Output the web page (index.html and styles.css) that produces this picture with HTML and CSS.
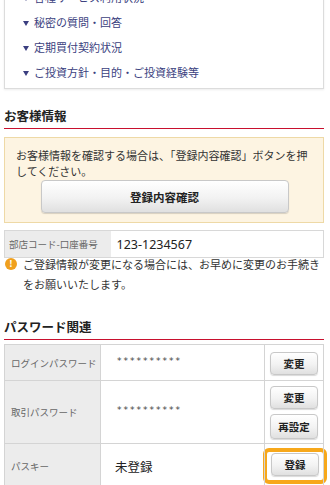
FILE: index.html
```html
<!DOCTYPE html>
<html lang="ja">
<head>
<meta charset="utf-8">
<link rel="stylesheet" href="styles.css">
</head>
<body>
<div class="page">
  <ul class="menu">
    <li><span class="tri"></span>各種サービス利用状況</li>
    <li><span class="tri"></span>秘密の質問・回答</li>
    <li><span class="tri"></span>定期買付契約状況</li>
    <li><span class="tri"></span>ご投資方針・目的・ご投資経験等</li>
  </ul>

  <h2 class="heading">お客様情報</h2>
  <div class="notice">
    <p>お客様情報を確認する場合は、「登録内容確認」ボタンを押してください。</p>
    <button class="btn btn-wide">登録内容確認</button>
  </div>

  <table class="info">
    <tr><th>部店コード-口座番号</th><td>123-1234567</td></tr>
  </table>

  <div class="warn">
    <span class="warn-icon">!</span>
    <p>ご登録情報が変更になる場合には、お早めに変更のお手続きをお願いいたします。</p>
  </div>

  <h2 class="heading heading-pw">パスワード関連</h2>
  <table class="pw">
    <colgroup><col class="c1"><col class="c2"><col class="c3"></colgroup>
    <tr class="r1">
      <th>ログインパスワード</th>
      <td class="val stars">**********</td>
      <td class="act"><button class="btn btn-sm">変更</button></td>
    </tr>
    <tr class="r2">
      <th>取引パスワード</th>
      <td class="val stars">**********</td>
      <td class="act"><button class="btn btn-sm">変更</button><button class="btn btn-sm">再設定</button></td>
    </tr>
    <tr class="r3">
      <th>パスキー</th>
      <td class="val">未登録</td>
      <td class="act"><span class="hl"><button class="btn btn-sm">登録</button></span></td>
    </tr>
  </table>
</div>
</body>
</html>
```

FILE: styles.css
```css
* { box-sizing: border-box; }
html, body { margin: 0; padding: 0; background: #fff; }
body {
  font-family: "Noto Sans CJK JP", "Noto Sans", sans-serif;
  font-size: 11px;
  color: #333;
  overflow: hidden;
}
.page { padding: 0 6px 0 4px; }

.menu {
  list-style: none;
  margin: -15px 0 0;
  padding: 0 0 3px 17px;
  border: 1px solid #dcdcdc;
  border-top: none;
  box-shadow: 0 1px 2px rgba(0,0,0,0.08);
}
.menu li {
  height: 25px;
  line-height: 25px;
  color: #3b3f80;
  display: flex;
  align-items: center;
}
.tri {
  width: 0; height: 0;
  border-left: 3.5px solid transparent;
  border-right: 3.5px solid transparent;
  border-top: 5px solid #3b3f80;
  margin: 1px 5px 0 1px;
}

.heading {
  margin: 18px 0 0;
  font-size: 12.5px;
  font-weight: bold;
  color: #222;
  line-height: 17px;
  padding-bottom: 4px;
  border-bottom: 1.5px solid #c8102e;
}
.heading-pw { margin-top: 24px; }

.notice {
  margin-top: 8px;
  background: #fdf4e2;
  border: 1px solid #eed9a6;
  padding: 9px 10px 9px 11px;
}
.notice p { margin: 0; line-height: 16px; }
.btn {
  font-family: inherit;
  font-weight: bold;
  color: #222;
  background: linear-gradient(#ffffff, #f2f2f2 55%, #e0e0e0);
  border: 1px solid #c8c8c8;
  border-radius: 4px;
  box-shadow: 0 1px 1px rgba(0,0,0,0.15);
  cursor: pointer;
  padding: 0;
}
.btn-wide {
  display: block;
  width: 248px;
  height: 33px;
  margin: 1px auto 0;
  font-size: 11.5px;
}

.info {
  width: 100%;
  margin-top: 7px;
  border-collapse: collapse;
  border: 1px solid #d8d8d8;
}
.info th {
  width: 106px;
  height: 27px;
  background: #ececec;
  color: #666;
  font-weight: normal;
  font-size: 9.5px;
  text-align: left;
  padding: 0 0 0 4px;
  white-space: nowrap;
}
.info td {
  font-family: "Noto Sans", sans-serif;
  font-size: 12.5px;
  color: #222;
  padding: 0 0 0 6px;
}

.warn {
  display: flex;
  align-items: flex-start;
  margin-top: -4px;
}
.warn-icon {
  flex: none;
  width: 12px; height: 12px;
  border-radius: 50%;
  background: #f0a01e;
  color: #fff;
  font-size: 9px;
  font-weight: bold;
  line-height: 12px;
  text-align: center;
  margin: 4px 6px 0 1px;
}
.warn p { margin: 0; line-height: 20px; }

.pw {
  width: 100%;
  margin-top: 4px;
  border-collapse: collapse;
  border: 1px solid #d4d4d4;
  table-layout: fixed;
}
.c1 { width: 96px; }
.c3 { width: 59px; }
.pw th, .pw td { border: 1px solid #d4d4d4; vertical-align: middle; }
.pw th {
  background: #ececec;
  color: #666;
  font-weight: normal;
  font-size: 9.5px;
  text-align: left;
  padding: 0 0 0 6px;
  white-space: nowrap;
}
.pw .val { padding: 0 0 0 16px; color: #222; }
.pw .stars { font-family: "DejaVu Sans", sans-serif; font-size: 9px; letter-spacing: 2px; color: #444; padding-bottom: 4px; }
.pw .val:not(.stars) { font-size: 12.5px; padding-left: 14px; }
.pw .act {
  padding: 5px 0 4px;
  text-align: center;
}
.btn-sm {
  display: block;
  width: 48px;
  height: 23px;
  margin: 0 auto;
  font-size: 10.5px;
}
.btn-sm + .btn-sm { margin-top: 5px; height: 25px; }
.r1 { height: 36px; }
.r2 { height: 60px; }
.r3 { height: 44px; }
.r3 .act { padding-top: 4px; vertical-align: top; }
.hl {
  display: block;
  width: 64px;
  margin: 0 -5px 0 -2px;
  padding: 1px 4px 4px 4px;
  border: 4px solid #f7a81b;
  border-radius: 6px;
}
```
